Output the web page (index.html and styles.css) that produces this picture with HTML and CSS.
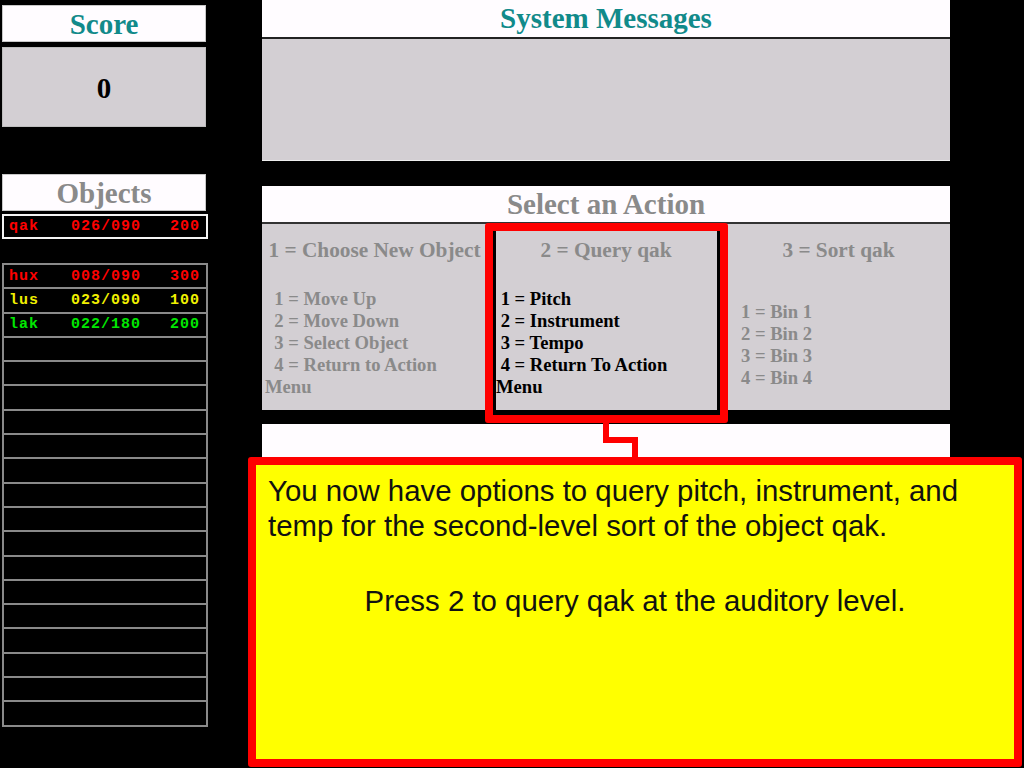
FILE: index.html
```html
<!DOCTYPE html>
<html>
<head>
<meta charset="utf-8">
<title>Sort Task</title>
<link rel="stylesheet" href="styles.css">
</head>
<body>
<div class="screen">
  <aside class="side">
    <div class="hdr teal score-hdr">Score</div>
    <div class="score-box">0</div>
    <div class="hdr grey objects-hdr">Objects</div>
    <div class="obj-row selected red"><span class="n">qak</span><span class="r">026/090</span><span class="s">200</span></div>
    <div class="obj-list">
      <div class="obj-row red"><span class="n">hux</span><span class="r">008/090</span><span class="s">300</span></div>
      <div class="obj-row yellow"><span class="n">lus</span><span class="r">023/090</span><span class="s">100</span></div>
      <div class="obj-row green"><span class="n">lak</span><span class="r">022/180</span><span class="s">200</span></div>
      <div class="obj-row"></div>
      <div class="obj-row"></div>
      <div class="obj-row"></div>
      <div class="obj-row"></div>
      <div class="obj-row"></div>
      <div class="obj-row"></div>
      <div class="obj-row"></div>
      <div class="obj-row"></div>
      <div class="obj-row"></div>
      <div class="obj-row"></div>
      <div class="obj-row"></div>
      <div class="obj-row"></div>
      <div class="obj-row"></div>
      <div class="obj-row"></div>
      <div class="obj-row"></div>
      <div class="obj-row"></div>
    </div>
  </aside>
  <main class="main">
    <section class="msgs">
      <div class="hdr teal msgs-hdr">System Messages</div>
      <div class="msg-body"></div>
    </section>
    <section class="actions">
      <div class="hdr grey act-hdr">Select an Action</div>
      <div class="cols">
        <div class="col c1">
          <div class="col-h">1 = Choose New Object</div>
          <div class="col-list"><p>&nbsp;&nbsp;1 = Move Up<br>&nbsp;&nbsp;2 = Move Down<br>&nbsp;&nbsp;3 = Select Object<br>&nbsp;&nbsp;4 = Return to Action<br>Menu</p></div>
        </div>
        <div class="col c2">
          <div class="col-h">2 = Query qak</div>
          <div class="col-list"><p>&nbsp;1 = Pitch<br>&nbsp;2 = Instrument<br>&nbsp;3 = Tempo<br>&nbsp;4 = Return To Action<br>Menu</p></div>
        </div>
        <div class="col c3">
          <div class="col-h">3 = Sort qak</div>
          <div class="col-list c3-list"><p>1 = Bin 1<br>2 = Bin 2<br>3 = Bin 3<br>4 = Bin 4</p></div>
        </div>
      </div>
    </section>
    <div class="next-box"></div>
  </main>

  <div class="highlight"></div>
  <svg class="connector" width="1024" height="768" viewBox="0 0 1024 768">
    <polyline points="606,420 606,440 635,440 635,460" fill="none" stroke="#ff0000" stroke-width="6"/>
  </svg>
  <div class="tip">
    <p class="tip-text">You now have options to query pitch, instrument, and temp for the second-level sort of the object qak.</p>
    <p class="tip-press">Press 2 to query qak at the auditory level.</p>
  </div>
</div>
</body>
</html>
```
FILE: styles.css
```css
html, body {
  margin: 0;
  padding: 0;
  background: #000;
}
.screen {
  position: relative;
  width: 1024px;
  height: 768px;
  overflow: hidden;
  display: flex;
  align-items: flex-start;
  background: #000;
  font-family: "Liberation Serif", "Times New Roman", serif;
}
.hdr {
  background: #fffcff;
  text-align: center;
  font-weight: bold;
  font-size: 29px;
  box-sizing: border-box;
}
.teal { color: #118a8a; }
.grey { color: #8a8a8a; }

/* left column */
.side {
  width: 206px;
  margin-left: 2px;
  padding-top: 5px;
}
.score-hdr {
  width: 204px;
  height: 37px;
  line-height: 37px;
  border: 1px solid #c8c8c8;
}
.score-box {
  width: 204px;
  height: 80px;
  margin-top: 5px;
  line-height: 80px;
  background: #d3cfd3;
  text-align: center;
  font-weight: bold;
  font-size: 29px;
  color: #000;
  box-sizing: border-box;
  border: 1px solid #bdbdbd;
}
.objects-hdr {
  width: 204px;
  height: 37px;
  line-height: 37px;
  margin-top: 47px;
  border: 1px solid #c8c8c8;
}
.obj-row {
  box-sizing: border-box;
  width: 206px;
  height: 26.3px;
  margin-top: -2px;
  border: 2px solid #8a8a8a;
  background: #000;
  display: flex;
  align-items: center;
  padding: 0 6px 0 5px;
  font-family: "Liberation Mono", "DejaVu Sans Mono", monospace;
  font-weight: bold;
  font-size: 15px;
  letter-spacing: 1px;
}
.obj-row.selected {
  margin-top: 3px;
  height: 25px;
  border-color: #f4f4f4;
}
.obj-list {
  margin-top: 26px;
}
.obj-row .n { width: 62px; }
.obj-row .r { flex: 1; }
.obj-row .s { text-align: right; }
.red { color: #ff0000; }
.yellow { color: #f0f000; }
.green { color: #00e600; }

/* main column */
.main {
  width: 688px;
  margin-left: 54px;
}
.msgs-hdr {
  height: 37px;
  line-height: 37px;
}
.msg-body {
  height: 124px;
  background: #d3cfd3;
  border-top: 2px solid #222;
  box-sizing: border-box;
  border-bottom: 1px solid #eee;
}
.actions {
  margin-top: 25px;
}
.act-hdr {
  height: 36px;
  line-height: 36px;
}
.cols {
  height: 188px;
  border-top: 2px solid #333;
  box-sizing: border-box;
  display: flex;
  background: #d3cfd3;
  font-weight: bold;
}
.col {
  display: flex;
  flex-direction: column;
  box-sizing: border-box;
}
.c1 { width: 225px; padding-left: 3px; color: #8a8a8a; }
.c2 { width: 238px; padding-left: 9px; color: #000; }
.c3 { flex: 1; padding-left: 14px; color: #8a8a8a; border-left: 2px solid #eee; }
.col-h {
  height: 52px;
  line-height: 52px;
  font-size: 21.3px;
  text-align: center;
  color: #8a8a8a;
  white-space: nowrap;
}
.c1 .col-h { margin-left: -3px; }
.c2 .col-h { margin-left: -9px; }
.c3 .col-h { margin-left: -14px; }
.col-list {
  flex: 1;
  display: flex;
  align-items: center;
}
.c3-list { padding-top: 3px; }
.col-list p {
  margin: 0;
  font-size: 18.6px;
  line-height: 22px;
  white-space: nowrap;
}
.next-box {
  margin-top: 14px;
  height: 200px;
  background: #fffcff;
}

/* overlays */
.highlight {
  position: absolute;
  left: 485px;
  top: 223px;
  width: 243px;
  height: 200px;
  box-sizing: border-box;
  border: 8px solid #ff0000;
  border-radius: 3px;
  box-shadow: inset 3px 0 0 #000, inset -3px 0 0 #000, inset 0 -3px 0 #000;
}
.connector {
  position: absolute;
  left: 0;
  top: 0;
}
.tip {
  position: absolute;
  left: 248px;
  top: 457px;
  width: 774px;
  height: 310px;
  box-sizing: border-box;
  border: 8px solid #ff0000;
  border-radius: 3px;
  background: #ffff00;
  padding: 8px 12px 0 12px;
  font-family: "Liberation Sans", Arial, sans-serif;
  font-size: 29.4px;
  line-height: 35px;
  color: #111;
}
.tip p { margin: 0; }
.tip-press {
  margin-top: 40px !important;
  text-align: center;
}
```
